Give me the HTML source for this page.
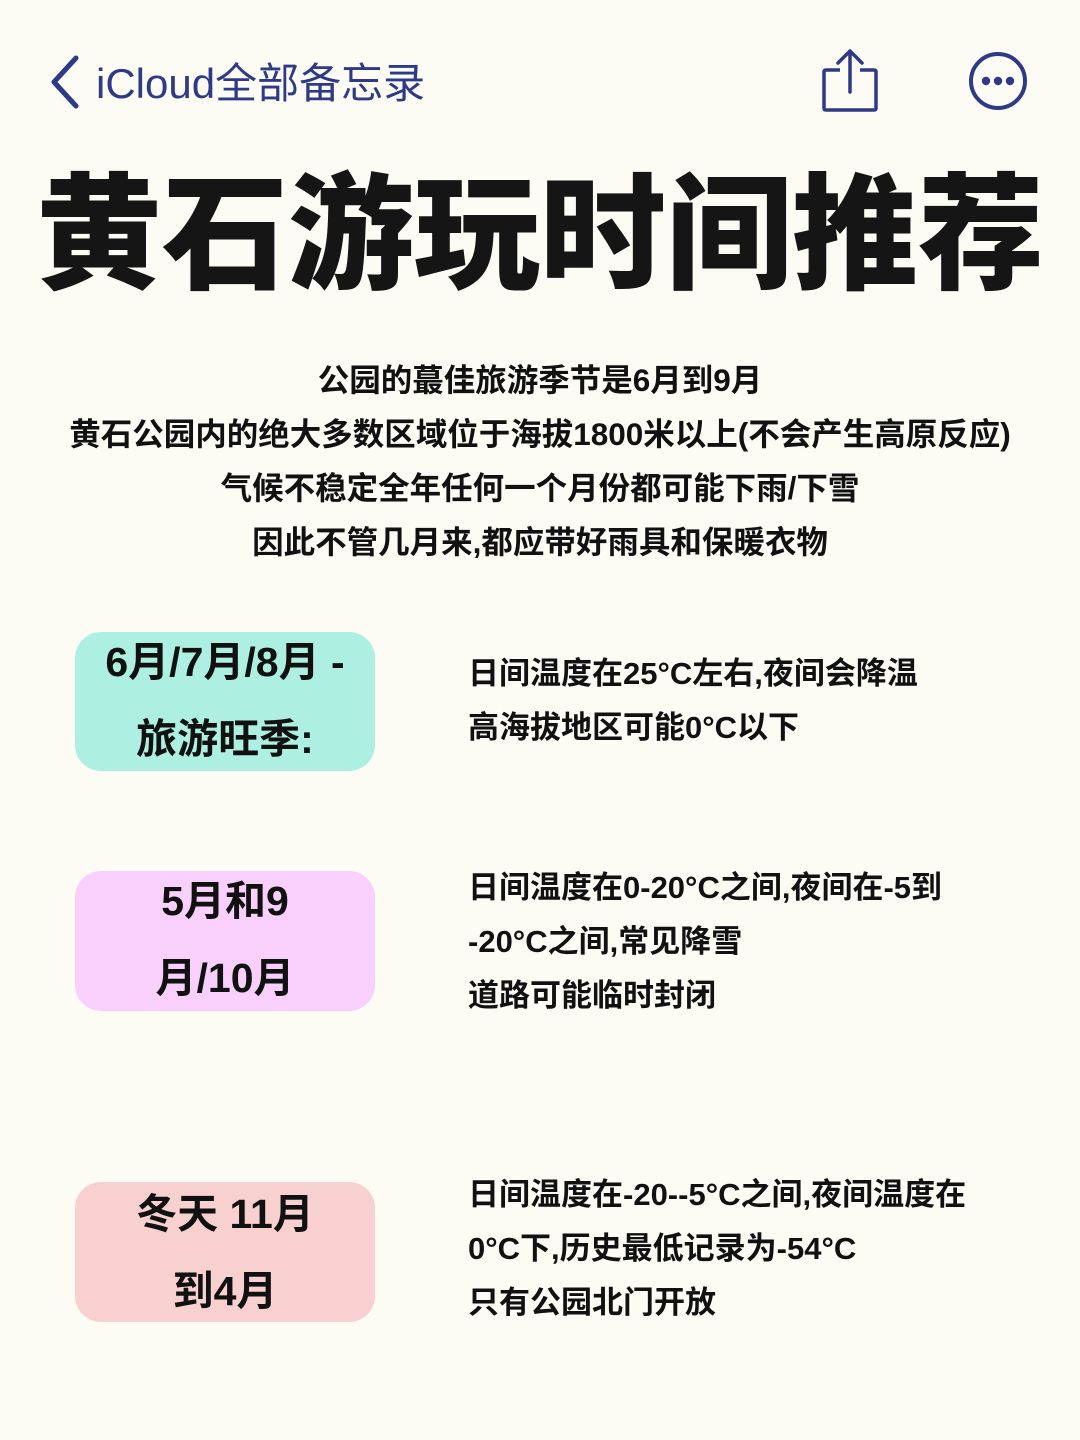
<!DOCTYPE html>
<html><head><meta charset="utf-8"><style>
body{margin:0;width:1080px;height:1440px;background:#fcfcf5;font-family:"Liberation Sans","Noto Sans CJK SC",sans-serif;position:relative;overflow:hidden;color:#111}
.nav{position:absolute;left:96px;top:50px;font-size:42px;color:#2e3a87;font-family:"Liberation Sans","Noto Sans CJK SC",sans-serif}
h1{position:absolute;left:0;width:1080px;top:156px;margin:0;text-align:center;font-size:126px;font-weight:900;line-height:160px;letter-spacing:0px;color:#151515}
.intro{position:absolute;top:353px;left:0;width:1080px;text-align:center;font-size:31.5px;font-weight:700;line-height:54px}
.box{position:absolute;left:75px;width:300px;border-radius:26px;text-align:center;font-size:41px;font-weight:700;line-height:77px}
.txt{position:absolute;left:468px;font-size:31px;font-weight:700;line-height:54px}
</style></head><body>
<svg style="position:absolute;left:46px;top:54px" width="36" height="56" viewBox="0 0 36 56"><path d="M30 4 L8 28 L30 52" fill="none" stroke="#2e3a87" stroke-width="5" stroke-linecap="round" stroke-linejoin="round"/></svg>
<div class="nav">iCloud全部备忘录</div>
<svg style="position:absolute;left:818px;top:46px" width="64" height="70" viewBox="0 0 64 70"><path d="M22 24 H8 Q6 24 6 26 V62 Q6 64 8 64 H56 Q58 64 58 62 V26 Q58 24 56 24 H42" fill="none" stroke="#2e3a87" stroke-width="3.5"/><path d="M32 46 V6 M20 17 L32 5 L44 17" fill="none" stroke="#2e3a87" stroke-width="3.5" stroke-linecap="round" stroke-linejoin="round"/></svg>
<svg style="position:absolute;left:968px;top:51px" width="62" height="62" viewBox="0 0 62 62"><circle cx="30" cy="30" r="27" fill="none" stroke="#2e3a87" stroke-width="4"/><circle cx="18" cy="30" r="4.2" fill="#2e3a87"/><circle cx="30" cy="30" r="4.2" fill="#2e3a87"/><circle cx="42" cy="30" r="4.2" fill="#2e3a87"/></svg>
<h1>黄石游玩时间推荐</h1>
<div class="intro">公园的蕞佳旅游季节是6月到9月<br>黄石公园内的绝大多数区域位于海拔1800米以上(不会产生高原反应)<br>气候不稳定全年任何一个月份都可能下雨/下雪<br>因此不管几月来,都应带好雨具和保暖衣物</div>
<div class="box" style="top:632px;height:139px;background:#adf0e2"><div style="margin-top:-8px">6月/7月/8月 -<br>旅游旺季:</div></div>
<div class="txt" style="top:647px">日间温度在25°C左右,夜间会降温<br>高海拔地区可能0°C以下</div>
<div class="box" style="top:871px;height:140px;background:#f8d0fb"><div style="margin-top:-8px">5月和9<br>月/10月</div></div>
<div class="txt" style="top:861px">日间温度在0-20°C之间,夜间在-5到<br>-20°C之间,常见降雪<br>道路可能临时封闭</div>
<div class="box" style="top:1182px;height:140px;background:#f9d0d0"><div style="margin-top:-6px">冬天 11月<br>到4月</div></div>
<div class="txt" style="top:1168px">日间温度在-20--5°C之间,夜间温度在<br>0°C下,历史最低记录为-54°C<br>只有公园北门开放</div>
</body></html>
